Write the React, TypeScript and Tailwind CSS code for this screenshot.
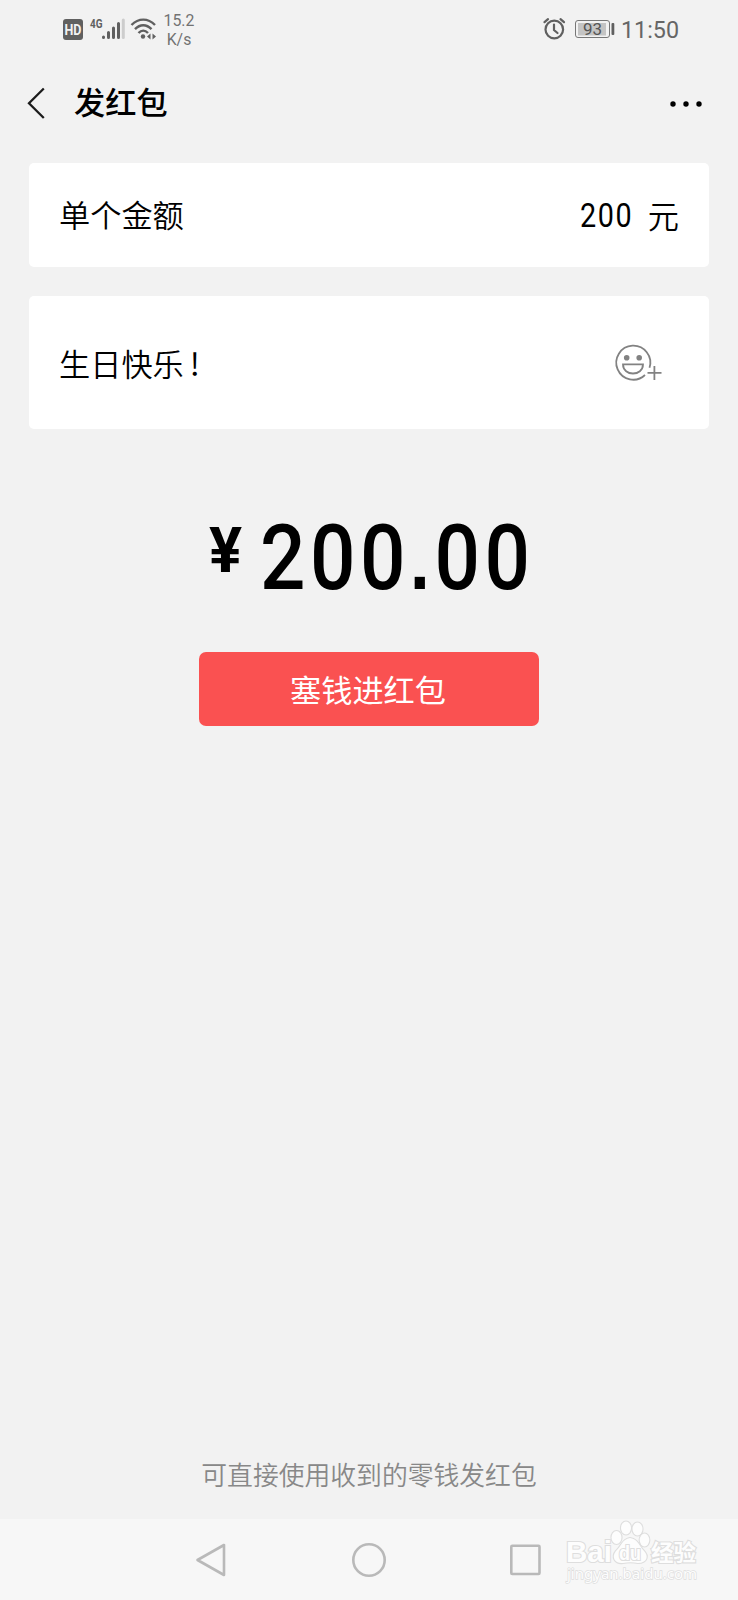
import React from "react";

const cjk = "font-['Noto_Sans_CJK_SC',sans-serif]";

function StatusBar() {
  return (
    <div className="flex h-[60px] items-center pl-[62px] pr-[60px] font-[Roboto,sans-serif] text-[#606060]">
      <svg className="h-[60px] w-[96px] shrink-0" viewBox="62 0 96 60" fill="none">
        <rect x="63" y="19" width="20" height="21" rx="3" fill="#606060" />
        <text x="64.500" y="34.500" fontSize="14" fontWeight="700" fill="#f2f2f2" textLength="17" lengthAdjust="spacingAndGlyphs" fontFamily="Roboto, sans-serif">HD</text>
        <text x="90" y="27.500" fontSize="13" fontWeight="700" fill="#606060" textLength="12.500" lengthAdjust="spacingAndGlyphs" fontFamily="Roboto, sans-serif">4G</text>
        <g strokeWidth="3" strokeLinecap="round" stroke="#606060">
          <path d="M103.500 37v.5M108.500 32.500V37.500M113.500 28V37.500M118.500 23.500V37.500" />
          <path d="M123.300 20V37.500" stroke="#cdcdcd" />
        </g>
        <g stroke="#606060" strokeWidth="2.400">
          <path d="M131.500 25C138.500 17.800 148 17.800 155 25M135 29.200C140 24 146.500 24 151.500 29.200M138.500 33C141.500 29.800 145 29.800 148 33" />
        </g>
        <circle cx="143" cy="36.500" r="2.200" fill="#606060" />
        <path d="M147 36.500l3.500-3v6zM156 36.500l-3.500-3v6z" fill="#606060" />
      </svg>
      <div className="ml-[5px] w-[32px] text-center text-[15.800px] leading-[18.500px] text-[#727272]">
        <div className="pt-px">15.2</div>
        <div>K/s</div>
      </div>
      <svg className="ml-auto h-[60px] w-[76px] shrink-0" viewBox="541 0 76 60" fill="none">
        <g stroke="#606060" strokeWidth="2.200" strokeLinecap="round">
          <circle cx="554.300" cy="29.500" r="8.800" />
          <path d="M554 24.500v5.500l3.500 3M544.500 22.200l3.500-3M564 22.200l-3.500-3" />
        </g>
        <rect x="575.500" y="20.500" width="34" height="17" rx="2.500" stroke="#777" />
        <rect x="578" y="23" width="28" height="12.500" fill="#c4c4c4" />
        <text x="592.500" y="34.500" textAnchor="middle" fontSize="17" fill="#555" fontFamily="Roboto, sans-serif">93</text>
        <rect x="611.500" y="23" width="2.800" height="12" rx="1" fill="#606060" />
      </svg>
      <span className="ml-[4px] w-[57px] whitespace-nowrap pt-px text-[23.300px] leading-none text-[#666]">11:50</span>
    </div>
  );
}

function Header() {
  return (
    <header className="flex h-[103px] items-center pb-[18px] pl-[26px] pr-[35px]">
      <svg className="h-[34px] w-[20px]" viewBox="0 0 20 34" fill="none" stroke="#1c1c1c" strokeWidth="2.300">
        <path d="M17.800 2.500L3 17.200L17.800 32" />
      </svg>
      <h1 className="ml-[28px] pb-[3px] text-[31.200px] font-medium leading-none text-black">发红包</h1>
      <svg className="ml-auto mt-[2px] h-[8px] w-[34px]" viewBox="0 0 34 8">
        <circle cx="4" cy="4" r="2.700" />
        <circle cx="17" cy="4" r="2.700" />
        <circle cx="30" cy="4" r="2.700" />
      </svg>
    </header>
  );
}

function SmileyPlus() {
  return (
    <svg className="h-[40px] w-[50px]" viewBox="612 342 50 40" fill="none" stroke="#828282" strokeWidth="1.800">
      <path d="M649.500 366.800A17 17 0 1 0 645 374" />
      <path d="M623 363.300h20c0 12.300-20 12.300-20 0z" />
      <circle cx="626.700" cy="356.700" r="2.800" fill="#828282" stroke="none" />
      <circle cx="639.200" cy="356.700" r="2.800" fill="#828282" stroke="none" />
      <path d="M654.400 365v14M647.500 371.800h14" />
    </svg>
  );
}

function Watermark() {
  return (
    <svg className="absolute right-[36px] top-0 h-[68px] w-[140px]" viewBox="562 1518 140 68" fill="#fdfdfd" stroke="#dedede" strokeWidth="2.200" paintOrder="stroke">
      <g fontFamily="Liberation Sans, sans-serif" fontWeight="700">
        <text x="566" y="1561" fontSize="30" textLength="46" lengthAdjust="spacingAndGlyphs">Bai</text>
        <ellipse cx="616.500" cy="1536.500" rx="5" ry="6.500" />
        <ellipse cx="626" cy="1527" rx="5" ry="6.500" />
        <ellipse cx="637.500" cy="1528" rx="5" ry="6.500" />
        <ellipse cx="644.500" cy="1539" rx="4.800" ry="6.500" />
        <path d="M630 1537C622 1538 621 1546 616 1550C611 1556 615 1563 623 1562C628 1561 633 1561 638 1562C647 1562 649 1555 644 1550C639 1545 638 1538 630 1537z" />
        <text x="619" y="1559" fontSize="20" textLength="22" lengthAdjust="spacingAndGlyphs">du</text>
        <text x="651" y="1560" fontSize="22.500" fontFamily="Noto Sans CJK SC, sans-serif">经验</text>
      </g>
      <text x="567" y="1578" fontSize="15" strokeWidth="1.400" fontFamily="Noto Sans, sans-serif" textLength="130" lengthAdjust="spacingAndGlyphs">jingyan.baidu.com</text>
    </svg>
  );
}

function NavBar() {
  return (
    <nav className="relative flex h-[81px] items-center bg-[#f7f7f7] pl-[194px]">
      <svg className="h-[36px] w-[350px]" viewBox="194 1541.500 350 36" fill="none" stroke="#b9b9b9" strokeWidth="2.600" strokeLinejoin="round">
        <path d="M224 1544.500v30L197.500 1559.500z" />
        <circle cx="369" cy="1559.500" r="15.700" />
        <rect x="511.300" y="1545.300" width="28.200" height="28.200" rx="1" />
      </svg>
      <Watermark />
    </nav>
  );
}

export default function App() {
  return (
    <div className={`flex h-[1600px] w-[738px] flex-col overflow-hidden bg-[#f2f2f2] text-black ${cjk}`}>
      <StatusBar />
      <Header />
      <main className="flex flex-1 flex-col items-center px-[29px]">
        <section className="flex h-[104px] w-full items-center rounded-[5px] bg-white pl-[30px] pr-[30px] text-[31.200px] font-[350]">
          <span className="-mt-[1px]">单个金额</span>
          <span className="ml-auto mt-[2px] w-[68px] origin-left scale-x-[0.885] font-[Roboto,sans-serif] text-[32.500px] font-normal tracking-[1.800px]">200</span>
          <span>元</span>
        </section>
        <section className="mt-[29px] flex h-[133px] w-full items-center rounded-[5px] bg-white pl-[30px] pr-[47px] text-[31.200px] font-[350]">
          <span className="flex-1 pt-px">生日快乐<span className="ml-[6px] font-normal">!</span></span>
          <SmileyPlus />
        </section>
        <div className="mt-[84px] flex h-[100px] w-[320px] items-start font-[Roboto,sans-serif] font-medium leading-none">
          <span className="mt-[6px] w-[51px] shrink-0 text-[63px] font-bold tracking-normal"><span className="inline-block origin-left scale-x-[0.98]">¥</span></span>
          <span className="shrink-0 origin-left scale-x-[0.885] text-[90.500px] tracking-[5px]">
            200<span className="font-['Liberation_Sans',sans-serif] text-[82px] font-bold">.</span>00
          </span>
        </div>
        <button className="mt-[39px] h-[74px] w-[340px] rounded-[7px] bg-[#fa5151] pr-[2px] text-[31.200px] text-white">塞钱进红包</button>
        <p className="mb-[26px] mt-auto text-[25.800px] font-[350] leading-[38px] text-[#888]">可直接使用收到的零钱发红包</p>
      </main>
      <NavBar />
    </div>
  );
}
